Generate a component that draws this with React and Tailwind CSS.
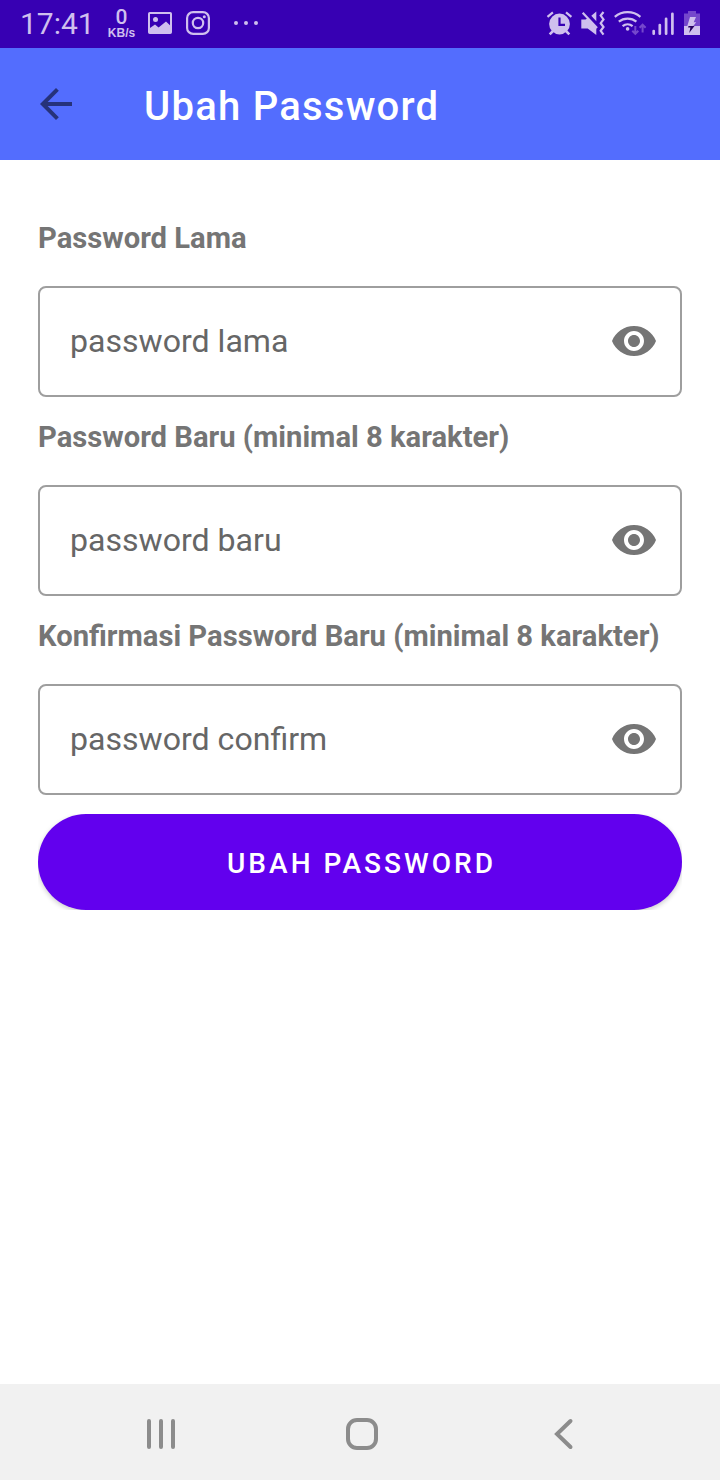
import React from 'react';

function StatusBar() {
  return (
    <header className="flex h-12 items-start justify-between bg-[#3700b3] text-[#cfbfee]">
      <div className="flex h-12 items-start">
        <span className="ml-5 mt-[6px] w-[75px] whitespace-nowrap text-[30px] leading-[36px]">17:41</span>
        <div className="ml-[10.5px] mt-[8px] flex w-8 flex-col items-center font-bold">
          <span className="h-[19px] text-[21px] font-medium leading-[19px]">0</span>
          <span className="h-[11px] text-[12px] leading-[12px] font-['Liberation_Sans',sans-serif]">KB/s</span>
        </div>
        <svg className="ml-[10.5px] mt-[11px] h-[24px] w-[24px]" viewBox="0 0 24 24" fill="none">
          <rect x="1" y="2" width="22" height="20" rx="0.8" stroke="#cfbfee" strokeWidth="2" />
          <circle cx="7.5" cy="8.4" r="2.5" fill="#cfbfee" />
          <path d="M2 17l5-3.4 3.6 2.8L18 10.6l4.5 4.2V22H2z" fill="#cfbfee" />
        </svg>
        <svg className="ml-[14px] mt-[11px] h-[24px] w-[24px]" viewBox="0 0 24 24" fill="none" stroke="#cfbfee" strokeWidth="2.2">
          <rect x="1.1" y="1.1" width="21.8" height="21.8" rx="6" />
          <circle cx="12" cy="12" r="5.2" />
          <circle cx="18.3" cy="5.8" r="1.5" fill="#cfbfee" stroke="none" />
        </svg>
        <svg className="ml-[23px] mt-[20px] h-[6px] w-[26px]" viewBox="0 0 26 6" fill="#cfbfee">
          <circle cx="3" cy="3.1" r="2" />
          <circle cx="13" cy="3.1" r="2" />
          <circle cx="23" cy="3.1" r="2" />
        </svg>
      </div>
      <svg className="h-12 w-[180px]" viewBox="0 0 180 48" fill="#cfbfee">
        <g stroke="#cfbfee" strokeWidth="2.2" fill="none">
          <path d="M7.5 16.8l5.4-4.4M26 12.4l5.4 4.4" />
          <path d="M13 31l-3.3 3.3M26 31l3.3 3.3" strokeWidth="2.6" />
        </g>
        <circle cx="19.5" cy="24" r="10.4" />
        <path d="M19.5 17.5v7.4h5.5" stroke="#3700b3" strokeWidth="2.2" fill="none" />
        <path d="M41.3 19.5h4.2l2.2-1.2 8.6 9.5v7.1l-8.6-6.4h-6.4z" />
        <path d="M51.3 15.8l5-4.3v9.8z" />
        <path d="M42.7 12.8L57 28" stroke="#cfbfee" strokeWidth="2.2" />
        <path d="M64 12l-2.8 3.6 2.8 3.8-2.8 3.8 2.8 3.8-2.8 3.8 2.8 3.8" transform="translate(-.5 0)" stroke="#cfbfee" strokeWidth="2.2" fill="none" />
        <g stroke="#cfbfee" strokeWidth="2.2" fill="none">
          <path d="M74.8 16.8c7.3-6.2 18.3-6.2 25.6 0" />
          <path d="M78.8 21.7c5-4.2 12.7-4.2 17.6 0" />
          <path d="M82.6 26.2c2.9-2.4 7.1-2.4 10 0" />
        </g>
        <circle cx="87.6" cy="28.9" r="1.8" />
        <path d="M95.3 26v7.5M92.3 30.7l3 3.2 3-3.2M102.6 32.5V25M99.6 27.8l3-3.2 3 3.2" stroke="#7548cc" strokeWidth="2" fill="none" />
        <path d="M113.7 31v2.7M119.8 25v8.7M126.1 18.8v14.9M132.4 13.8v19.9" stroke="#cfbfee" strokeWidth="2.7" strokeLinecap="round" />
        <path d="M148 11h8v2.5h4V26h-16V13.5h4z" fill="#7548cc" />
        <path d="M144 26h16v9h-16z" />
        <path d="M150 17h6l-2.3 5.2h2.5L153.3 26h-6z" />
        <path d="M148.5 26h6l-5.3 7 1.2-5.4h-2.3z" fill="#260061" />
      </svg>
    </header>
  );
}

function AppBar() {
  return (
    <div className="flex h-28 items-center bg-[#536dfe]">
      <svg className="ml-10 h-8 w-8" viewBox="4 4 16 16" fill="#26327a">
        <path d="M20 11H7.83l5.59-5.59L12 4l-8 8 8 8 1.41-1.41L7.83 13H20v-2z" />
      </svg>
      <h1 className="ml-[72px] mt-[6px] whitespace-nowrap text-[40px] font-medium leading-[48px] tracking-[1.25px] text-white">Ubah Password</h1>
    </div>
  );
}

function PasswordField({ label, hint }) {
  return (
    <div>
      <p className="h-[38px] whitespace-nowrap text-[29.2px] font-bold leading-[36px] text-[#757575]">{label}</p>
      <div className="mt-[28px] flex h-[111px] items-center justify-between rounded-[8px] border-2 border-[#9e9e9e] pb-[2px] pl-[30px] pr-6">
        <span className="text-[32.1px] leading-[38px] text-[#666666]">{hint}</span>
        <svg className="h-[30px] w-11" viewBox="1 4.5 22 15" fill="#757575">
          <path d="M12 4.5C7 4.5 2.73 7.61 1 12c1.73 4.39 6 7.5 11 7.5s9.27-3.11 11-7.5c-1.73-4.39-6-7.5-11-7.5zM12 17c-2.76 0-5-2.24-5-5s2.24-5 5-5 5 2.24 5 5-2.24 5-5 5zm0-8c-1.66 0-3 1.34-3 3s1.34 3 3 3 3-1.34 3-3-1.34-3-3-3z" />
        </svg>
      </div>
    </div>
  );
}

function NavigationBar() {
  return (
    <nav className="flex h-24 items-center bg-[#f1f1f1] pt-1 text-[#8c8c8c]">
      <svg className="ml-[146px] h-8 w-[30px]" viewBox="0 0 30 32" stroke="currentColor" strokeWidth="4" strokeLinecap="round">
        <path d="M3 3v26M15 3v26M27 3v26" />
      </svg>
      <svg className="ml-[170px] h-8 w-8" viewBox="0 0 32 32" fill="none" stroke="currentColor" strokeWidth="4">
        <rect x="2" y="2" width="28" height="28" rx="9" />
      </svg>
      <svg className="ml-[176px] h-8 w-5" viewBox="0 0 20 32" fill="none" stroke="currentColor" strokeWidth="4" strokeLinecap="round">
        <path d="M16.5 3L3 16l13.5 13" />
      </svg>
    </nav>
  );
}

export default function App() {
  return (
    <div className="flex h-[1480px] w-[720px] flex-col overflow-hidden bg-white font-['Roboto',sans-serif]">
      <StatusBar />
      <AppBar />
      <main className="flex-1 px-[38px] pt-[60px]">
        <div className="flex flex-col gap-[22px]">
          <PasswordField label="Password Lama" hint="password lama" />
          <PasswordField label="Password Baru (minimal 8 karakter)" hint="password baru" />
          <PasswordField label="Konfirmasi Password Baru (minimal 8 karakter)" hint="password confirm" />
        </div>
        <div className="mt-[19px] h-24 overflow-hidden">
          <button className="block h-24 w-full rounded-full bg-[#6200ee] pl-[3px] pt-[4px] text-[28px] font-medium tracking-[3.05px] text-white shadow-[0_2px_5px_rgba(0,0,0,0.2)]">UBAH PASSWORD</button>
        </div>
      </main>
      <NavigationBar />
    </div>
  );
}
